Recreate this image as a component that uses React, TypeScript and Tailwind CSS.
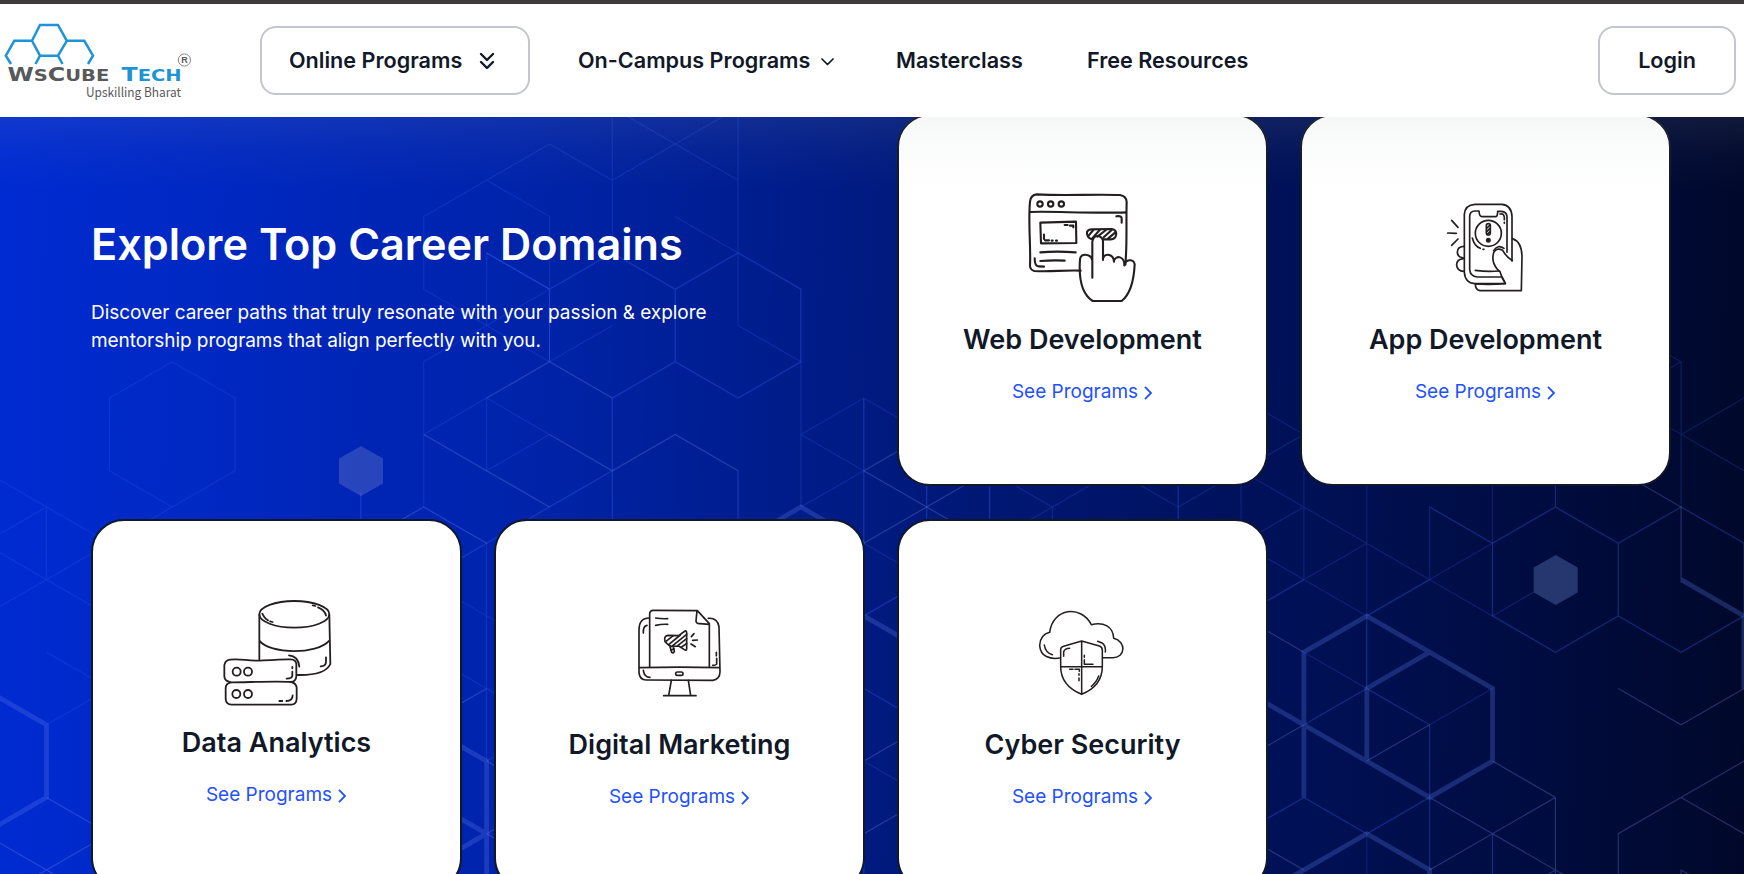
import React from "react";

type Edge = number[];

const px = (i: number) => 46.5 + 62.87 * i;
const py = (j: number) => 144 + 36.3 * j - 117;

// Each entry is a polyline over the isometric lattice: column, row, column, row, ...
const faint: Edge[] = [
  [9, -1, 9, 3], [11, -1, 11, 5, 12, 6], [9, 1, 8, 0, 7, 1, 6, 2, 6, 4, 7, 5, 8, 6], [7, 1, 8, 2, 8, 6],
  [9, 1, 11, -1], [9, -1, 11, 1], [10, 2, 11, 3], [7, 5, 7, 3, 8, 4], [7, 5, 8, 4],
  [12, 6, 12, 10], [9, 5, 8, 6], [7, 5, 6, 6, 6, 10], [7, 9, 7, 7, 8, 8, 7, 9], [6, 8, 7, 7],
  [2, 6, 3, 7, 3, 9, 2, 10, 1, 9, 1, 7, 2, 6], [2, 10, 1, 11], [-1, 9, 0, 10, 1, 11, -1, 13], [-1, 11, 0, 10, 0, 12],
  [-1, 11, 1, 13], [0, 14, 1, 15, 0, 16], [7, 11, 7, 17], [6, 12, 8, 14], [6, 14, 8, 16, 7, 17],
  [12, 8, 13, 7, 14, 8], [12, 8, 13, 9, 12, 10], [13, 11, 14, 12],
  [15, 9, 16, 10, 17, 9, 18, 10, 19, 9, 20, 8, 19, 7], [16, 10, 16, 11], [16, 10, 15, 11],
  [19, 9, 19, 11, 20, 10, 19, 9], [20, 9, 20, 12], [20, 10, 23, 13], [21, 9, 21, 13],
  [21, 11, 20, 12], [19, 11, 21, 13], [22, 12, 23, 11], [23, 9, 23, 11], [22, 10, 22, 12],
  [23, 13, 24, 12], [26, 10, 26, 6, 25, 5], [26, 6, 25, 7, 27, 9], [26, 8, 27, 7], [20, 14, 21, 15],
  [22, 16, 23, 15], [21, 19, 21, 21], [13, 17, 14, 18],
];
const mid: Edge[] = [
  [9, 3, 10, 4, 11, 3, 12, 4, 12, 6, 11, 7, 10, 6, 9, 7], [9, 3, 8, 4], [7, 3, 8, 4, 8, 6], [10, 4, 10, 6],
  [9, 7, 9, 11], [9, 9, 7, 11, 6, 12], [11, 9, 11, 11], [5, 9.6, 5, 11], [13, 7, 13, 21],
  [14, 9, 14, 11], [15, 9, 15, 11], [18, 9, 18, 11], [13, 13, 14, 12], [13, 15, 14, 16],
  [19, 13, 20, 12], [21, 13, 22, 12], [22, 10, 23, 11, 24, 10, 25, 11, 26, 10, 27, 11, 27, 13, 26, 14, 25, 13, 24, 14, 23, 13, 23, 11],
  [24, 9, 24, 10], [25, 11, 25, 13], [21, 13, 21, 15, 22, 16, 22, 20], [20, 16, 21, 15],
  [19, 19, 20, 18, 21, 19, 22, 18], [23, 19, 23, 21],
];
const pale: Edge[] = [
  [7, 7, 8, 6, 9, 7], [6, 8, 8, 10], [8, 8, 9, 9, 10, 8, 11, 9], [5, 11, 6, 10, 7, 11],
  [6, 16, 7, 15], [7, 19, 8, 18], [7, 19, 8, 20], [7, 17, 8, 18],
  [0, 18, 1, 19, -1, 21], [-1, 19, 1, 21], [13, 9, 15, 11], [13, 9, 14, 8], [13, 11, 15, 9], [13, 17, 14, 16], [13, 19, 14, 18],
  [19, 13, 20, 14], [19, 17, 20, 16], [21, 17, 22, 16], [19, 19, 20, 20], [25, 9, 26, 10, 26, 12],
  [25, 15, 26, 16, 27, 15], [23, 17, 24, 18, 24, 21], [22, 18, 24, 20, 25, 21], [24, 18, 22, 20],
  [27, 17, 25, 19, 25, 21], [26, 18, 27, 19], [26, 21, 26, 20, 27, 21], [24, 20, 23, 21],
];
const thick: Edge[] = [
  [-1, 15, 0, 16, 0, 18, -1, 19], [6, 16, 7, 17, 7, 21], [6, 18, 7, 19, 6, 20], [11, 11, 12, 10, 13, 11], [13, 13, 14, 14],
  [20, 18, 20, 14, 21, 13, 23, 15, 23, 17, 22, 18, 19, 15], [22, 14, 21, 15, 21, 17],
  [19, 21, 21, 19, 22, 20, 22, 22], [26, 12, 27, 13, 27, 15],
];

const toPath = (edges: Edge[]) =>
  edges
    .map((e) => {
      let d = "";
      for (let k = 0; k < e.length; k += 2) d += `${k ? "L" : "M"}${px(e[k]).toFixed(1)} ${py(e[k + 1]).toFixed(1)}`;
      return d;
    })
    .join("");

function Lattice() {
  return (
    <svg className="absolute inset-0 h-[757px] w-[1744px]" viewBox="0 0 1744 757" fill="none" aria-hidden="true">
      <path d={toPath(faint)} stroke="#3f6cff" strokeOpacity=".2" strokeWidth="1.2" />
      <path d={toPath(mid)} stroke="#3f6cff" strokeOpacity=".3" strokeWidth="1.3" />
      <path d={toPath(pale)} stroke="#90a4ff" strokeOpacity=".25" strokeWidth="1.2" />
      <path d={toPath(thick)} stroke="#5a7ae6" strokeOpacity=".29" strokeWidth="4.8" />
      <path d="M361 329l22 12.4v25L361 379l-22-12.6v-25z" fill="#7080c8" fillOpacity=".36" />
      <path d="M1555.7 438l22 12.4v25l-22 12.6-22-12.6v-25z" fill="#26366f" />
    </svg>
  );
}

function Icon({ viewBox, width = 5, children }: { viewBox: string; width?: number; children: React.ReactNode }) {
  return (
    <svg
      className="size-[140px] shrink-0"
      viewBox={viewBox}
      fill="none"
      stroke="#231f20"
      strokeWidth={width}
      strokeLinecap="round"
      strokeLinejoin="round"
      aria-hidden="true"
    >
      {children}
    </svg>
  );
}

const WebIcon = () => (
  <Icon viewBox="39 0 420 420" width={6.3}>
    <path d="M242 302C190 300 150 306 103 303Q91 300 90 288C93 230 84 160 90 95Q92 75 110 73C190 78 280 72 360 75Q379 78 380 96C378 160 382 220 376 284" />
    <path d="M90 126C150 123 280 131 378 127" />
    <circle cx="120" cy="102" r="8" />
    <circle cx="152" cy="102" r="8" />
    <circle cx="184" cy="102" r="8" />
    <path d="M349 139Q366 136 365 146V158M121 158L228 155 229 219 123 220Z" />
    <path d="M194 165h9M210 167h10v5M132 194V207M135 211h12M155 212h3M168 212h3" />
    <path d="M121 247Q170 243 227 247M121 273Q160 270 194 272M104 265Q104 290 117 289L132 290" />
    <path d="M277 208C260 204 252 178 275 178L335 177C356 181 351 208 332 208H309" />
    <path d="M264 199L280 180M276 206L299 180M292 200L318 180M311 202L335 180M324 206L346 187" />
    <path d="M277 323V215Q280 196 295 198Q309 202 309 215V270M277 272C273 250 241 248 240 268C237 310 241 370 278 393H365Q400 365 404 283C402 265 375 267 373 286M310 263C315 249 341 252 342 275M342 272C348 254 374 259 373 286" />
  </Icon>
);

const AppIcon = () => (
  <Icon viewBox="-12 -30 420 420" width={5}>
    <path d="M276 243V110Q275 75 245 73H165Q135 75 133 103V276Q135 309 164 311L256 310 246 291H172Q150 290 149 268V110Q149 93 165 93H177Q178 110 186 110H228Q233 108 233 94H244Q260 95 261 110V217" />
    <circle cx="205" cy="160" r="39" />
    <rect x="199" y="131" width="12" height="34" rx="6" />
    <path d="M201 144l8-8M201 154l8-8M202 163l8-8" />
    <circle cx="205" cy="181" r="5" fill="#231f20" />
    <path d="M240 102Q252 99 253 112V119M253 127V130M157 174Q163 199 181 205M189 208h3" />
    <path d="M277 242Q260 232 248 211Q230 201 221 218Q213 245 232 268L240 275 246 292 256 310M277 176Q305 185 306 229L304 332H180Q166 330 166 312" />
    <path d="M221 212Q233 192 252 205M166 271Q200 276 238 273M166 312Q210 315 256 311" />
    <path d="M133 199Q112 199 112 217Q113 232 131 234M131 236Q109 238 110 256Q112 273 131 274" />
    <path d="M95 121L114 142M83 159L109 160M95 196L114 177" />
  </Icon>
);

const DataIcon = () => (
  <Icon viewBox="-9 -18 420 420" width={5.4}>
    <ellipse cx="253" cy="103" rx="105" ry="40" />
    <path d="M148 104V238M358 104L361 252C350 277 315 286 263 285M148 182C180 223 320 225 358 182" />
    <path d="M157 101Q165 117 174 121M180 124l8 2M308 76l8 2M324 82Q345 90 348 107" />
    <path d="M237 226Q265 228 268 260M348 232V245Q348 258 332 259" />
    <path d="M60 239C100 235 110 245 160 241C205 241 210 237 242 238Q258 239 259 252V288Q258 305 243 306C200 303 110 307 65 307Q44 305 43 290V256Q45 241 60 239ZM65 307Q47 309 47 325V357Q48 373 65 374H244Q259 373 260 357V323Q258 309 244 306" />
    <circle cx="80" cy="275" r="12" /><circle cx="114" cy="275" r="12" />
    <circle cx="79" cy="342" r="12" /><circle cx="114" cy="342" r="12" />
    <path d="M247 261v4M247 275V287Q246 296 230 296M248 346Q248 363 229 363M208 363h9" />
  </Icon>
);

const MarketingIcon = () => (
  <Icon viewBox="-30 -48 420 420" width={5}>
    <path d="M89 231V72Q89 61 100 61L232 62 268 101V231M231 62L228 93Q229 102 239 101L268 103" />
    <path d="M88 84Q57 84 57 120V248Q59 271 80 270L278 271Q299 269 300 246L297 110Q292 83 265 85M60 233Q180 230 299 233" />
    <path d="M107 84Q125 87 143 86M107 106Q125 102 143 103M70 129Q69 108 81 106M70 241Q73 262 90 262M289 187V197M290 205V222Q288 226 278 226" />
    <rect x="167" y="246" width="22" height="10" rx="5" />
    <path d="M154 271L146 317M205 271L212 317M131 317H228" />
    <path d="M134 147Q134 136 146 136L176 137 195 123Q200 121 200 129V177Q199 183 193 179L176 168 155 169Q145 167 140 160Q133 155 134 147ZM150 170L155 187Q160 191 163 185L160 170" />
    <path d="M138 154L160 137M146 164L181 135M158 167L200 133M174 166L200 146M185 171L200 160M153 181l9-5" />
    <path d="M214 140L222 131M218 151L232 150M213 162L226 170" />
  </Icon>
);

const SecurityIcon = () => (
  <Icon viewBox="-21 -48 420 420" width={4.6}>
    <path d="M121 204C90 209 61 200 59 166Q61 134 89 127C98 53 184 44 214 104C250 96 280 108 281 145C320 154 317 204 277 203H249" />
    <path d="M185 153L238 168Q247 171 247 181V229C247 270 225 297 185 313C145 297 122 270 122 229V181Q121 172 131 169ZM185 153V313M122 230H247" />
    <path d="M73 165Q76 188 97 194M131 199V185Q135 175 149 175M233 154L248 160Q258 169 256 186" />
    <path d="M193 196V202M193 209V223H219M149 238h10M165 238H178V244M177 251v5M177 264v8" />
    <path d="M236 258Q230 276 214 289" />
  </Icon>
);

type CardProps = { title: string; icon: React.ReactNode; padding?: string; titleGap?: string };

function DomainCard({ title, icon, padding = "pt-[53px]", titleGap = "mt-[13px]" }: CardProps) {
  return (
    <article className={`flex h-[372px] flex-col items-center rounded-[33px] border-2 border-[#111827] bg-white ${padding}`}>
      {icon}
      <h3 className={`text-[27px] leading-[36px] font-semibold whitespace-nowrap text-[#111827] ${titleGap}`}>{title}</h3>
      <a href="#" className="mt-[19px] flex items-center gap-1 pl-px text-[19px] leading-[30px] text-[#1f51ff]">
        See Programs
        <svg className="mt-[2px] h-[14px] w-[12px]" viewBox="0 0 12 14" fill="none" stroke="currentColor" strokeWidth="1.8" aria-hidden="true">
          <path d="M3 0.8l6 6.2-6 6.2" />
        </svg>
      </a>
    </article>
  );
}

function Logo() {
  return (
    <svg className="h-[113px] w-[200px] shrink-0" viewBox="0 4 200 113" fill="none">
      <g stroke="#1e94d6" strokeWidth="2.5">
        <path d="M40 25H58L66.8 40.8 58 55.7H40L32 40.8ZM32 40.8H14.3L5.8 55.7 11 64M40 55.7L35.5 64M66.8 40.8H84.3L93 55.7 88 64M58 55.7L62.5 64" />
      </g>
      <g fontSize="19.5" className="font-['DejaVu_Sans'] font-bold">
        <text transform="translate(7.5 80.5) scale(1.22 1)" fill="#58595b">
          W<tspan fontSize="16">S</tspan>C<tspan fontSize="16">UBE</tspan>
        </text>
        <text transform="translate(121.5 80.5) scale(1.22 1)" fill="#1e94d6">
          T<tspan fontSize="16">ECH</tspan>
        </text>
      </g>
      <text x="86" y="96.5" fontSize="13" fill="#58595b" textLength="95" lengthAdjust="spacingAndGlyphs" className="font-['Noto_Sans_CJK_SC'] font-normal">
        Upskilling Bharat
      </text>
      <circle cx="184.4" cy="60" r="6.1" stroke="#77787b" strokeWidth=".9" />
      <text x="184.5" y="63.2" fontSize="9" textAnchor="middle" fill="#58595b" className="font-['Liberation_Sans']">R</text>
    </svg>
  );
}

export default function App() {
  return (
    <div className="flex h-[874px] w-[1744px] flex-col overflow-hidden bg-white font-['Inter',sans-serif]">
      <header className="relative z-10 flex h-[117px] shrink-0 items-center border-t-4 border-[#3c3a3b] bg-white text-[21.6px] leading-[32px] font-semibold whitespace-nowrap text-[#111827]">
        <Logo />
        <button className="ml-[60px] flex h-[69px] w-[270px] shrink-0 items-center rounded-2xl border-2 border-[#c3c6cc] pl-[27px]">
          <span className="w-[190px] pb-px text-left">Online Programs</span>
          <svg className="h-[18px] w-[16px]" viewBox="0 0 16 18" fill="none" stroke="currentColor" strokeWidth="2.4" strokeLinecap="round" strokeLinejoin="round">
            <path d="M2 2l6 6 6-6M2 10l6 6 6-6" />
          </svg>
        </button>
        <nav className="flex pb-px">
          <a href="#" className="ml-[48px] flex w-[318px] items-center">
            <span className="w-[243px]">On-Campus Programs</span>
            <svg className="mt-[3px] h-[8px] w-[13px]" viewBox="0 0 13 8" fill="none" stroke="currentColor" strokeWidth="1.7" strokeLinecap="round" strokeLinejoin="round">
              <path d="M1 1l5.5 5.5L12 1" />
            </svg>
          </a>
          <a href="#" className="w-[191px]">Masterclass</a>
          <a href="#">Free Resources</a>
        </nav>
        <button className="mr-[8px] ml-auto h-[69px] w-[138px] rounded-2xl border-2 border-[#c3c6cc] pb-px">Login</button>
      </header>

      <main className="relative h-[757px] bg-[linear-gradient(91deg,#002bd2_0%,#0023aa_30%,#001a80_50%,#00115a_72%,#000c40_88%,#00082a_100%)]">
        <Lattice />
        <div className="relative -mt-[3px] ml-[91px] grid w-[1580px] grid-cols-4 gap-x-[32px] gap-y-[33px]">
          <section className="col-span-2 pt-[99px] text-white">
            <h1 className="text-[43.2px] leading-[62px] font-semibold whitespace-nowrap">Explore Top Career Domains</h1>
            <p className="mt-[24px] w-[640px] text-[19px] leading-[28px] tracking-[-0.05px]">
              Discover career paths that truly resonate with your passion &amp; explore
              <br />
              mentorship programs that align perfectly with you.
            </p>
          </section>
          <DomainCard title="Web Development" icon={<WebIcon />} padding="pt-[54px]" titleGap="mt-[12px]" />
          <DomainCard title="App Development" icon={<AppIcon />} padding="pt-[54px]" titleGap="mt-[12px]" />
          <DomainCard title="Data Analytics" icon={<DataIcon />} titleGap="mt-[11px]" />
          <DomainCard title="Digital Marketing" icon={<MarketingIcon />} />
          <DomainCard title="Cyber Security" icon={<SecurityIcon />} />
        </div>
        <div className="pointer-events-none absolute inset-x-0 top-0 h-[72px] bg-[linear-gradient(to_bottom,rgba(165,178,178,.1),rgba(165,178,178,.04)_45%,rgba(165,178,178,0))]" />
      </main>
    </div>
  );
}
